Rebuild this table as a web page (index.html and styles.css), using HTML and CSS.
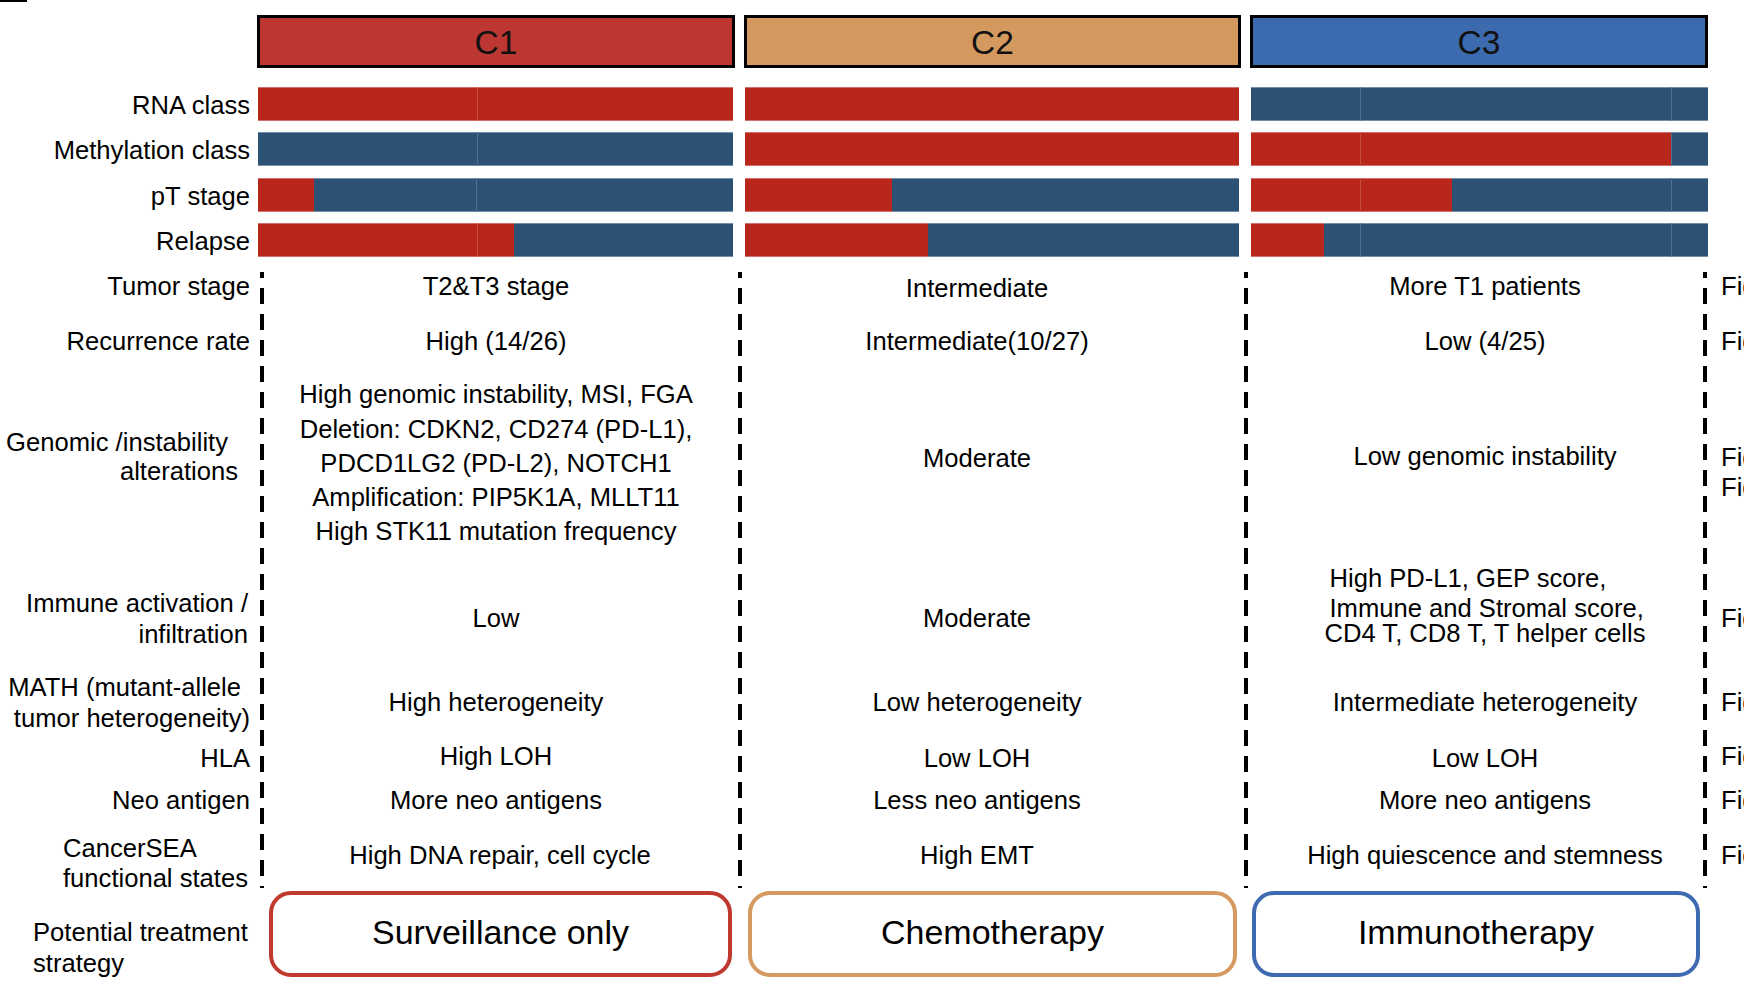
FILE: index.html
```html
<!DOCTYPE html>
<html>
<head>
<meta charset="utf-8">
<title>Clusters</title>
<link rel="stylesheet" href="styles.css">
</head>
<body>
<div class="topline"></div>

<div class="clusters">
  <div class="cluster cl1">C1</div>
  <div class="cluster cl2">C2</div>
  <div class="cluster cl3">C3</div>
</div>

<div class="bars">
  <div class="bar-label">RNA class</div>
  <div class="bar k1"><div class="seg r" style="width:46%"></div><div class="seg r sep" style="width:54%"></div></div>
  <div class="bar k2"><div class="seg r" style="width:100%"></div></div>
  <div class="bar k3"><div class="seg b" style="width:23.9%"></div><div class="seg b sep" style="width:68.1%"></div><div class="seg b sep" style="width:8%"></div></div>

  <div class="bar-label">Methylation class</div>
  <div class="bar k1"><div class="seg b" style="width:46%"></div><div class="seg b sep" style="width:54%"></div></div>
  <div class="bar k2"><div class="seg r" style="width:100%"></div></div>
  <div class="bar k3"><div class="seg r" style="width:23.9%"></div><div class="seg r sep" style="width:68.1%"></div><div class="seg b sep" style="width:8%"></div></div>

  <div class="bar-label">pT stage</div>
  <div class="bar k1"><div class="seg r" style="width:11.8%"></div><div class="seg b" style="width:34.2%"></div><div class="seg b sep" style="width:54%"></div></div>
  <div class="bar k2"><div class="seg r" style="width:29.7%"></div><div class="seg b" style="width:70.3%"></div></div>
  <div class="bar k3"><div class="seg r" style="width:23.9%"></div><div class="seg r sep" style="width:20.1%"></div><div class="seg b" style="width:48%"></div><div class="seg b sep" style="width:8%"></div></div>

  <div class="bar-label">Relapse</div>
  <div class="bar k1"><div class="seg r" style="width:46%"></div><div class="seg r sep" style="width:7.9%"></div><div class="seg b" style="width:46.1%"></div></div>
  <div class="bar k2"><div class="seg r" style="width:37%"></div><div class="seg b" style="width:63%"></div></div>
  <div class="bar k3"><div class="seg r" style="width:16%"></div><div class="seg b" style="width:7.9%"></div><div class="seg b sep" style="width:68.1%"></div><div class="seg b sep" style="width:8%"></div></div>
</div>

<div class="table">
  <div class="dash d1"></div>
  <div class="dash d2"></div>
  <div class="dash d3"></div>
  <div class="dash d4"></div>

  <!-- Tumor stage -->
  <div class="cell lab">Tumor stage</div>
  <div class="cell v1">T2&amp;T3 stage</div>
  <div class="cell v2 low1">Intermediate</div>
  <div class="cell v3">More T1 patients</div>
  <div class="cell fig">Fig. 1C</div>

  <!-- Recurrence -->
  <div class="cell lab">Recurrence rate</div>
  <div class="cell v1">High (14/26)</div>
  <div class="cell v2">Intermediate(10/27)</div>
  <div class="cell v3">Low (4/25)</div>
  <div class="cell fig">Fig. 1D</div>

  <!-- Genomic -->
  <div class="cell lab lab-gen"><div><div class="gl1">Genomic /instability</div><div class="gl2">alterations</div></div></div>
  <div class="cell v1 gen5"><div>High genomic instability, MSI, FGA<br>Deletion: CDKN2, CD274 (PD-L1),<br>PDCD1LG2 (PD-L2), NOTCH1<br>Amplification: PIP5K1A, MLLT11<br>High STK11 mutation frequency</div></div>
  <div class="cell v2 up10">Moderate</div>
  <div class="cell v3 up12">Low genomic instability</div>
  <div class="cell fig fig2">Fig. 2A<br>Fig. 2B</div>

  <!-- Immune -->
  <div class="cell lab two31 pr12"><div>Immune activation /<br>infiltration</div></div>
  <div class="cell v1">Low</div>
  <div class="cell v2">Moderate</div>
  <div class="cell v3 imm"><div class="immblk"><div class="il1">High PD-L1, GEP score,</div><div class="il2">Immune and Stromal score,</div><div class="il3">CD4 T, CD8 T, T helper cells</div></div></div>
  <div class="cell fig">Fig. 3A</div>

  <!-- MATH -->
  <div class="cell lab two31"><div><div class="ml1">MATH (mutant-allele</div><div>tumor heterogeneity)</div></div></div>
  <div class="cell v1">High heterogeneity</div>
  <div class="cell v2">Low heterogeneity</div>
  <div class="cell v3">Intermediate heterogeneity</div>
  <div class="cell fig">Fig. 4A</div>

  <!-- HLA -->
  <div class="cell lab hla">HLA</div>
  <div class="cell v1 hla up2">High LOH</div>
  <div class="cell v2 hla">Low LOH</div>
  <div class="cell v3 hla">Low LOH</div>
  <div class="cell fig hla up2">Fig. 4B</div>

  <!-- Neo antigen -->
  <div class="cell lab">Neo antigen</div>
  <div class="cell v1">More neo antigens</div>
  <div class="cell v2">Less neo antigens</div>
  <div class="cell v3">More neo antigens</div>
  <div class="cell fig">Fig. 4C</div>

  <!-- CancerSEA -->
  <div class="cell lab lab-sea"><div>CancerSEA<br>functional states</div></div>
  <div class="cell v1 sea1">High DNA repair, cell cycle</div>
  <div class="cell v2">High EMT</div>
  <div class="cell v3">High quiescence and stemness</div>
  <div class="cell fig">Fig. 5A</div>
</div>

<div class="treat">
  <div class="treat-label">Potential treatment<br>strategy</div>
  <div class="tbox t1">Surveillance only</div>
  <div class="tbox t2">Chemotherapy</div>
  <div class="tbox t3">Immunotherapy</div>
</div>
</body>
</html>
```

FILE: styles.css
```css
html, body {
  margin: 0;
  padding: 0;
  background: #ffffff;
}

body {
  width: 1744px;
  height: 984px;
  overflow: hidden;
  font-family: "Liberation Sans", Arial, sans-serif;
  font-size: 25.6px;
  color: #000;
}

.topline {
  width: 27px;
  height: 2px;
  background: #000;
}

/* Cluster headers */
.clusters {
  display: flex;
  gap: 9px;
  padding-left: 257px;
  margin-top: 13px;
  height: 53px;
}

.cluster {
  box-sizing: border-box;
  height: 53px;
  border: 3px solid #000;
  display: flex;
  align-items: center;
  justify-content: center;
  font-size: 33.5px;
  padding-top: 2px;
  color: #111;
}

.cl1 { width: 478px; background: #bc3731; }
.cl2 { width: 497px; background: #d4995e; }
.cl3 { width: 458px; background: #3c6aae; }

/* Annotation bars */
.bars {
  display: grid;
  grid-template-columns: 258px 475px 506px 469px;
  grid-template-rows: repeat(4, 34px);
  row-gap: 11.33px;
  margin-top: 19px;
}

.bar-label {
  padding-right: 8px;
  text-align: right;
  line-height: 36px;
  white-space: nowrap;
}

.bar {
  display: flex;
  height: 34px;
}

.bar.k2, .bar.k3 { margin-left: 12px; }

.seg {
  box-sizing: border-box;
  height: 100%;
  box-shadow: inset 0 1px 0 rgba(255, 255, 255, 0.35), inset 0 -1px 0 rgba(255, 255, 255, 0.35);
}

.seg.r { background: #b8261c; }
.seg.b { background: #2b5275; }
.seg.sep { border-left: 1px solid rgba(255, 255, 255, 0.18); }

/* Characteristics table */
.table {
  display: grid;
  grid-template-columns: 260px 4px 474px 4px 502px 4px 455px 4px 37px;
  grid-template-rows: 50px 60px 182px 130px 38px 58px 42px 68px;
  margin-top: 5px;
}

.dash {
  grid-row: 1 / -1;
  background-image: repeating-linear-gradient(to bottom, #000 0, #000 16px, transparent 16px, transparent 26px);
  background-clip: content-box;
  padding-top: 10px;
  margin-bottom: 2px;
}

.d1 { grid-column: 2; }
.d2 { grid-column: 4; }
.d3 { grid-column: 6; }
.d4 { grid-column: 8; }

.cell {
  display: flex;
  align-items: center;
  justify-content: center;
  text-align: center;
  white-space: nowrap;
  line-height: 29px;
  min-width: 0;
}

.lab {
  grid-column: 1;
  justify-content: flex-end;
  text-align: right;
  padding-right: 10px;
}

.v1 { grid-column: 3; padding-right: 10px; }
.v2 { grid-column: 5; padding-right: 32px; }
.v3 { grid-column: 7; padding-left: 19px; }

.fig {
  grid-column: 9;
  justify-content: flex-start;
  text-align: left;
  padding-left: 14px;
  overflow: hidden;
}

.low1 { padding-top: 3px; }
.up2 { padding-bottom: 2px; }

.lab-gen { padding-bottom: 11px; }
.lab-gen .gl1 { padding-right: 22px; }
.lab-gen .gl2 { padding-right: 12px; }

.gen5 { line-height: 34.3px; }
.up10 { padding-bottom: 8px; }
.up12 { padding-bottom: 12px; }

.fig2 { line-height: 30px; padding-top: 18px; }

.two31 { line-height: 31px; }
.pr12 { padding-right: 12px; }
.ml1 { padding-right: 9px; }

.imm { padding-bottom: 32px; }
.immblk { text-align: left; }
.il1 { line-height: 32px; padding-left: 5px; }
.il2 { line-height: 28px; padding-left: 5px; }
.il3 { line-height: 22px; }

.hla { padding-top: 16px; }
.hla.up2 { padding-top: 14px; }

.lab-sea {
  justify-content: flex-start;
  text-align: left;
  padding-left: 63px;
  padding-right: 0;
  padding-top: 14px;
  line-height: 30px;
}

.sea1 { padding-right: 2px; }

/* Treatment strategy */
.treat {
  display: flex;
  margin-top: 1px;
  height: 86px;
}

.treat-label {
  box-sizing: border-box;
  width: 269px;
  padding-left: 33px;
  padding-top: 26px;
  line-height: 31px;
  white-space: nowrap;
}

.tbox {
  box-sizing: border-box;
  height: 86px;
  border: 4px solid;
  border-radius: 22px;
  display: flex;
  align-items: center;
  justify-content: center;
  font-size: 34px;
  color: #000;
  padding-bottom: 3px;
}

.t1 { width: 463px; border-color: #c0392f; }
.t2 { width: 489px; margin-left: 16px; border-color: #d59a5f; }
.t3 { width: 448px; margin-left: 15px; border-color: #3d6ab0; }
```
